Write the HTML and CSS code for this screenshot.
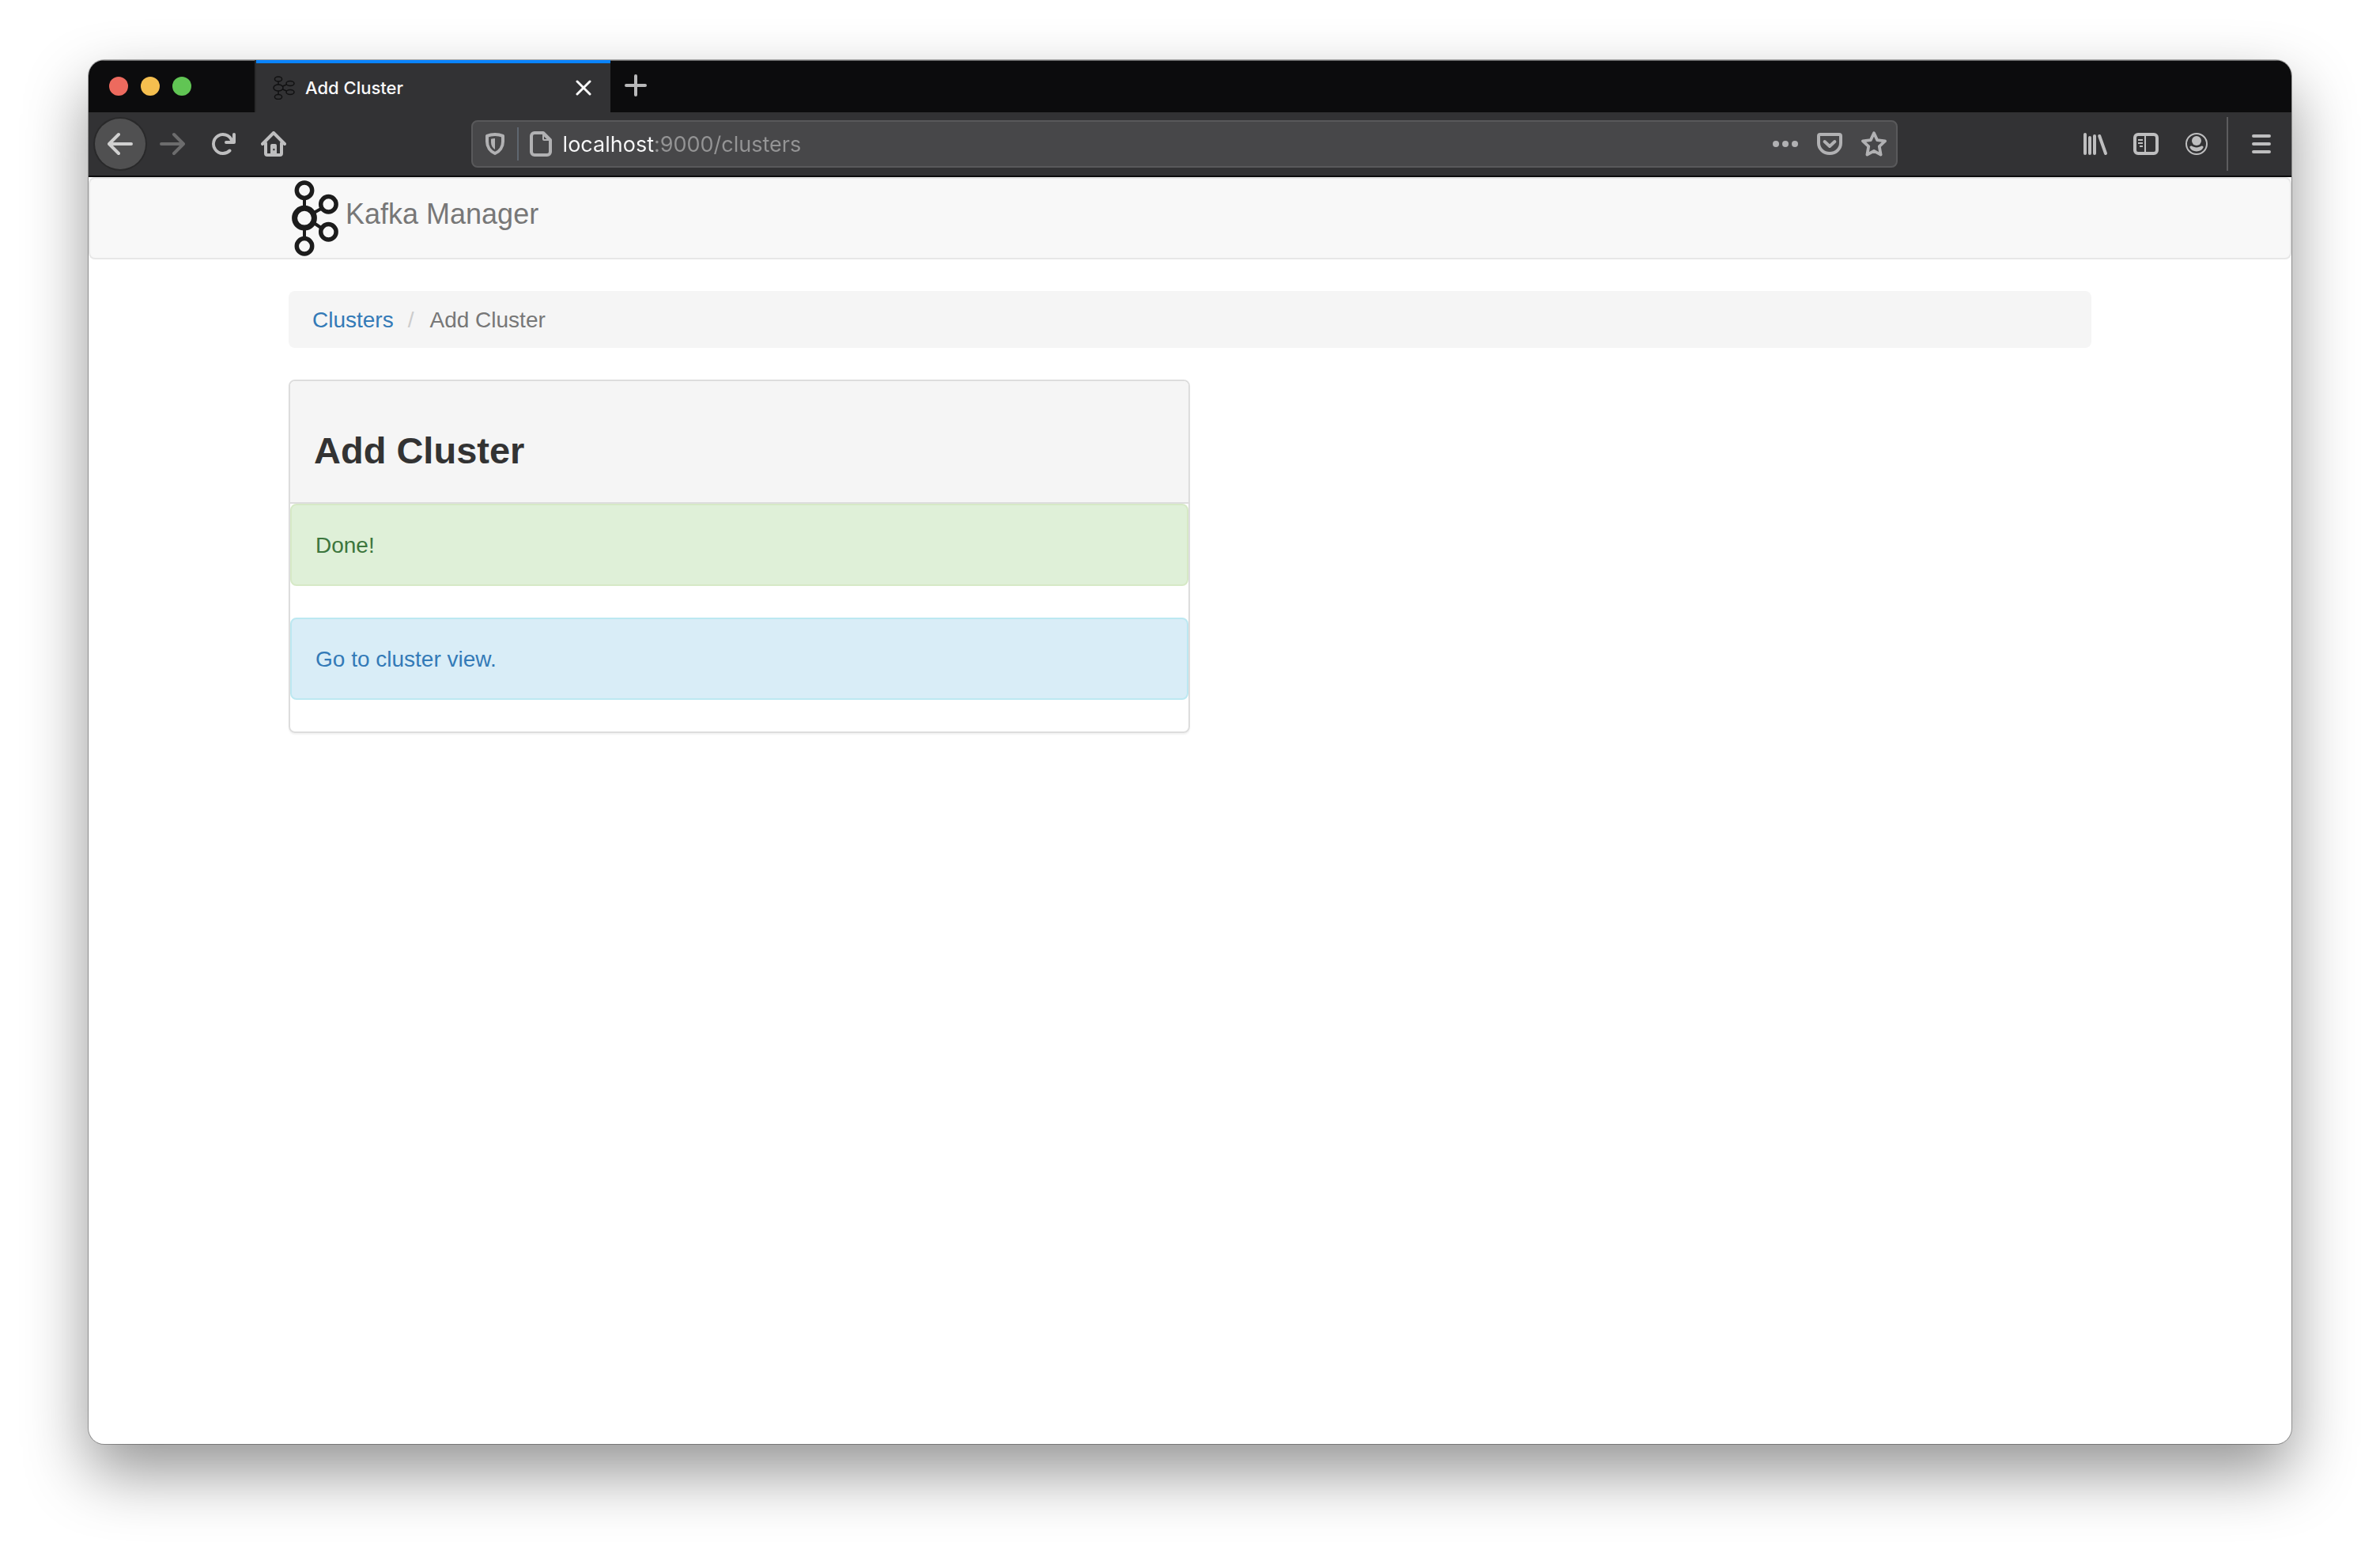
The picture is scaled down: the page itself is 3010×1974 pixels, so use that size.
FILE: index.html
```html
<!DOCTYPE html>
<html lang="en">
<head>
<meta charset="utf-8">
<title>Add Cluster</title>
<link rel="stylesheet" href="styles.css">
</head>
<body>
<svg class="defs" aria-hidden="true">
  <symbol id="kafka" viewBox="0 0 60 96">
    <g fill="none" stroke="currentColor">
      <path stroke-width="4" d="M16 23v12M16 60v13M28 41l9-5M28 54l9 6"/>
      <g stroke-width="5.500">
        <circle cx="16" cy="12.700" r="9.700"/>
        <circle cx="16" cy="83.300" r="9.700"/>
        <circle cx="46.400" cy="30.300" r="9.700"/>
        <circle cx="46.400" cy="65.300" r="9.700"/>
      </g>
      <circle cx="16" cy="47.700" r="12.400" stroke-width="7"/>
    </g>
  </symbol>
</svg>
<div class="window">
  <header class="tabbar">
    <div class="lights">
      <button class="light red" aria-label="Close window"></button>
      <button class="light yellow" aria-label="Minimize window"></button>
      <button class="light green" aria-label="Zoom window"></button>
    </div>
    <div class="tab">
      <svg class="favicon" viewBox="0 0 30 30" fill="none" stroke="#111112" stroke-width="1.5">
        <ellipse cx="8" cy="4" rx="4.6" ry="3"/><ellipse cx="8" cy="15" rx="6" ry="4"/><ellipse cx="8" cy="26.500" rx="4.600" ry="3"/>
        <ellipse cx="23" cy="9.500" rx="5" ry="3"/><ellipse cx="23" cy="20.500" rx="5" ry="3"/>
        <path d="M8 7v4M8 19v4M13.500 13l5-2M13.500 17l5 2"/>
      </svg>
      <span class="tab-title">Add Cluster</span>
      <button class="tab-close" aria-label="Close tab">
        <svg class="x" viewBox="0 0 20 20"><path d="M2 2l16 16M18 2L2 18" stroke="currentColor" stroke-width="3" stroke-linecap="round"/></svg>
      </button>
    </div>
    <button class="tool new-tab" aria-label="New tab">
      <svg class="icon" viewBox="0 0 32 32"><path d="M16 4v24M4 16h24" stroke="currentColor" stroke-width="4" stroke-linecap="round"/></svg>
    </button>
  </header>

  <nav class="toolbar" aria-label="Browser toolbar">
    <button class="tool back" aria-label="Back">
      <svg class="icon line" viewBox="0 0 16 16"><path d="M15 8H1.500M7 2L1 8l6 6"/></svg>
    </button>
    <button class="tool forward" aria-label="Forward" disabled>
      <svg class="icon line" viewBox="0 0 16 16"><path d="M1 8h13.500M9 2l6 6-6 6"/></svg>
    </button>
    <button class="tool" aria-label="Reload">
      <svg class="icon" viewBox="0 0 16 16"><path fill="currentColor" d="M15 1a1 1 0 0 0-1 1v2.418A6.995 6.995 0 1 0 8 15a6.954 6.954 0 0 0 4.950-2.050 1 1 0 0 0-1.414-1.414A5.019 5.019 0 1 1 12.549 6H10a1 1 0 0 0 0 2h5a1 1 0 0 0 1-1V2a1 1 0 0 0-1-1z"/></svg>
    </button>
    <button class="tool" aria-label="Home">
      <svg class="icon line" viewBox="0 0 16 16"><path d="M1 8l7-7 7 7M3 7.500V14a1 1 0 0 0 1 1h8a1 1 0 0 0 1-1V7.500"/><path class="solid" fill-rule="evenodd" d="M7 8h2a1 1 0 0 1 1 1v6H6V9a1 1 0 0 1 1-1zm.7 3v1.100h1V11z"/></svg>
    </button>
    <div class="spring"></div>
    <div class="urlbar">
      <button class="url-tool" aria-label="Tracking protection">
        <svg class="icon" viewBox="0 0 16 16"><path fill="none" stroke="currentColor" stroke-width="2" stroke-linejoin="round" d="M8 2c1.800 0 3.500.3 5 .9v3.600c0 3.500-2 6.300-5 7.500-3-1.200-5-4-5-7.500V2.900C4.500 2.300 6.200 2 8 2z"/><path fill="currentColor" d="M8 4.500v7C6.400 10.500 5.500 9 5.500 7V4.900C6.300 4.600 7.100 4.500 8 4.500z"/></svg>
      </button>
      <span class="url-sep"></span>
      <button class="url-tool" aria-label="Site information">
        <svg class="icon line" viewBox="0 0 16 16"><path d="M4 1h5.500L14 5.500V13a2 2 0 0 1-2 2H4a2 2 0 0 1-2-2V3a2 2 0 0 1 2-2z"/><path class="solid" fill-rule="evenodd" d="M9 1h1l4 4v1h-4a1 1 0 0 1-1-1zm1 2.200V5h1.800z"/></svg>
      </button>
      <input class="url" type="text" aria-label="Address" value="localhost:9000/clusters">
      <button class="url-tool" aria-label="Page actions">
        <svg class="icon" viewBox="0 0 16 16" fill="currentColor"><circle cx="2" cy="8" r="2"/><circle cx="8" cy="8" r="2"/><circle cx="14" cy="8" r="2"/></svg>
      </button>
      <button class="url-tool" aria-label="Save to Pocket">
        <svg class="icon line" viewBox="0 0 16 16"><path d="M2 2h12a1 1 0 0 1 1 1v4.500a7 6.500 0 0 1-14 0V3a1 1 0 0 1 1-1z"/><path d="M4.800 6.500L8 9.500l3.200-3"/></svg>
      </button>
      <button class="url-tool" aria-label="Bookmark this page">
        <svg class="icon" viewBox="0 0 16 16"><path fill="none" stroke="currentColor" stroke-width="1.900" stroke-linejoin="round" d="M8 1.100l2.100 4.500 4.900.6-3.600 3.400.9 5.200L8 12.400l-4.300 2.400.9-5.200L1 6.200l4.900-.6z"/></svg>
      </button>
    </div>
    <div class="spring"></div>
    <button class="tool" aria-label="Library">
      <svg class="icon line" viewBox="0 0 16 16"><path d="M1.500 2v12M4.500 4v10M7.500 3v11M10.600 3l3.900 11"/></svg>
    </button>
    <button class="tool" aria-label="Sidebars">
      <svg class="icon" viewBox="0 0 16 16" fill="none" stroke="currentColor"><rect x="1" y="2" width="14" height="12" rx="2" stroke-width="2"/><path d="M7.500 2v12M3 5.500h3M3 7.500h3M4 9.500h2"/></svg>
    </button>
    <button class="tool" aria-label="Account">
      <svg class="icon" viewBox="0 0 16 16" fill="currentColor"><circle cx="8" cy="8" r="6.500" fill="none" stroke="currentColor"/><circle cx="8" cy="6" r="3"/><path d="M4.800 9.300C5.700 9.900 6.800 10.200 8 10.200s2.300-.3 3.200-.9c.8-.2 1.300.5 1 1.100C11.500 11.900 9.900 12.700 8 12.700s-3.500-.8-4.200-2.300c-.3-.6.2-1.300 1-1.100z"/></svg>
    </button>
    <span class="tool-sep"></span>
    <button class="tool" aria-label="Menu">
      <svg class="icon line" viewBox="0 0 16 16"><path d="M3 3h10M3 8h10M3 13h10"/></svg>
    </button>
  </nav>

  <div class="page">
    <nav class="navbar">
      <div class="container">
        <a class="brand" href="#">
          <svg class="logo"><use href="#kafka"/></svg>
          <span class="brand-name">Kafka Manager</span>
        </a>
      </div>
    </nav>
    <main class="container">
      <ol class="breadcrumb">
        <li><a href="#">Clusters</a></li>
        <li class="active">Add Cluster</li>
      </ol>
      <section class="panel">
        <div class="panel-heading"><h3>Add Cluster</h3></div>
        <div class="alert success">Done!</div>
        <div class="alert info"><a href="#">Go to cluster view.</a></div>
      </section>
    </main>
  </div>
</div>
</body>
</html>
```
FILE: styles.css
```css
* { box-sizing: border-box; }

body {
  margin: 0;
  min-height: 100vh;
  padding: 76px 112px 148px;
  display: flex;
  background: #fff;
  color: #333;
  font: 28px/40px "Liberation Sans", Arial, sans-serif;
}

button {
  padding: 0;
  border: 0;
  background: none;
  color: inherit;
}

a { color: #337ab7; text-decoration: none; }

.defs { position: absolute; width: 0; height: 0; }

.window {
  flex: 1;
  display: flex;
  flex-direction: column;
  overflow: hidden;
  border-radius: 20px;
  background: #fff;
  box-shadow: 0 0 0 1px rgba(0, 0, 0, .3), 0 36px 80px rgba(0, 0, 0, .42);
}

/* Tab strip */
.tabbar {
  display: flex;
  height: 66px;
  background: #0c0c0d;
  box-shadow: inset 0 1px #6a6a6a;
  color: #b8b8b9;
}

.lights {
  display: flex;
  align-items: center;
  gap: 16px;
  width: 212px;
  padding-left: 26px;
  border-right: 2px solid #2a2a2b;
}

.light { width: 24px; height: 24px; border-radius: 50%; }
.red { background: #ed6a5e; }
.yellow { background: #f5bf4f; }
.green { background: #61c554; }

.tab {
  display: flex;
  align-items: center;
  width: 448px;
  padding: 0 22px 0 20px;
  border-top: 4px solid #0a84ff;
  background: #323234;
  color: #f9f9fa;
}

.favicon { width: 30px; height: 30px; margin-right: 12px; }

.tab-title {
  flex: 1;
  font: 500 22px/32px Inter, sans-serif;
}

.tab-close { display: flex; padding: 2px; }
.x { width: 20px; height: 20px; }
.new-tab { width: 68px; height: 66px; }

/* Toolbar */
.toolbar {
  display: flex;
  align-items: center;
  height: 82px;
  padding: 0 6px 0 8px;
  border-bottom: 2px solid #0c0c0d;
  background: #323234;
  color: #bebebf;
}

.tool {
  display: flex;
  align-items: center;
  justify-content: center;
  width: 64px;
  height: 64px;
}

.icon { width: 32px; height: 32px; }

.line {
  fill: none;
  stroke: currentColor;
  stroke-width: 2;
  stroke-linecap: round;
  stroke-linejoin: round;
}

.solid { fill: currentColor; stroke: none; }

.back {
  margin-right: 2px;
  border-radius: 50%;
  background: #505051;
  box-shadow: 0 0 0 2px #29292a;
  color: #d0d0d0;
}

.forward { color: #6c6c6d; }
.spring { flex: 109; }

.urlbar {
  flex: 902;
  display: flex;
  align-items: center;
  height: 60px;
  border: 2px solid #59595b;
  border-radius: 8px;
  background: #474749;
  color: #b1b1b3;
}

.url-tool {
  display: flex;
  align-items: center;
  justify-content: center;
  width: 56px;
  height: 56px;
}

.url-sep { width: 2px; height: 42px; background: #5f6670; }

/* The host is drawn brighter than the port and path. */
.url {
  flex: 1;
  min-width: 0;
  padding: 2px 0 0;
  border: 0;
  background: linear-gradient(90deg, #f9f9fa 115px, #949495 115px);
  -webkit-background-clip: text;
  background-clip: text;
  color: #949495;
  -webkit-text-fill-color: transparent;
  font: 27px/40px Inter, sans-serif;
}

.tool-sep { width: 2px; height: 68px; margin: 0 10px 0 6px; background: #5c5c5e; }

/* Page */
.page { flex: 1; }

.container {
  max-width: 2340px;
  margin: 0 auto;
  padding: 0 30px;
}

.navbar {
  margin-bottom: 40px;
  border: 2px solid #e7e7e7;
  border-radius: 8px;
  background: #f8f8f8;
}

.brand {
  display: flex;
  gap: 8px;
  height: 100px;
  padding: 2px 4px;
  color: #777;
}

.logo { width: 60px; height: 96px; color: #1c1c1c; }
.brand-name { font-size: 36px; line-height: 86px; }

.breadcrumb {
  display: flex;
  margin: 0 0 40px;
  padding: 17px 30px 15px;
  border-radius: 8px;
  background: #f5f5f5;
  list-style: none;
}

.breadcrumb .active { color: #777; }

.breadcrumb .active::before {
  content: "/";
  padding: 0 20px 0 18px;
  color: #ccc;
}

.panel {
  width: 50%;
  border: 2px solid #ddd;
  border-radius: 8px;
  box-shadow: 0 2px 2px rgba(0, 0, 0, .05);
}

.panel-heading {
  padding: 20px 30px;
  border-bottom: 2px solid #ddd;
  border-radius: 6px 6px 0 0;
  background: #f5f5f5;
}

h3 {
  margin: 41px 0 19px;
  font-size: 47px;
  font-weight: 700;
  line-height: 53px;
}

.alert {
  margin-bottom: 40px;
  padding: 31px 30px 29px;
  border: 2px solid;
  border-radius: 8px;
}

.success { border-color: #d6e9c6; background: #dff0d8; color: #3c763d; }
.info { border-color: #bce8f1; background: #d9edf7; }
```
